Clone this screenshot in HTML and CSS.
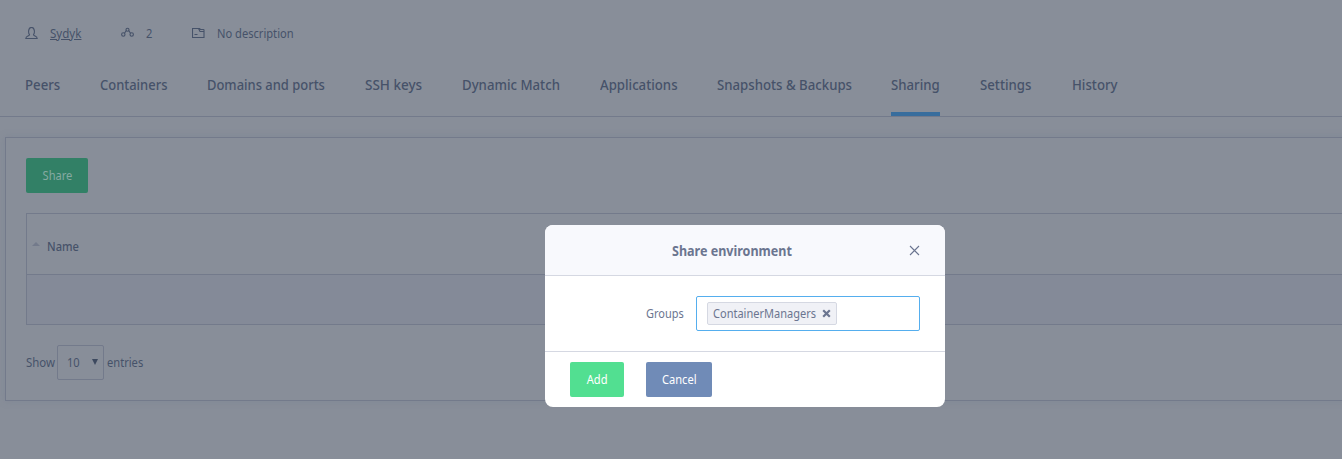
FILE: index.html
```
<!DOCTYPE html>
<html lang="en">
<head>
<meta charset="utf-8">
<title>Share environment</title>
<link rel="stylesheet" href="styles.css">
</head>
<body>
<div class="page">
  <header class="meta">
    <svg class="icon user" width="13" height="13" viewBox="0 0 13 13"><path d="M4.500 7.500C3.300 6.500 2.800 .5 6.500 .5S9.700 6.500 8.500 7.500c0 2 3.500 1.200 3.700 4H.8c.2-2.800 3.700-2 3.700-4z"/></svg>
    <a class="owner"><span class="t">Sydyk</span></a>
    <svg class="icon peers" width="13" height="12" viewBox="0 0 13 12"><circle cx="6.500" cy="2.700" r="1.500"/><circle cx="2.300" cy="7.500" r="1.700"/><circle cx="10.700" cy="7.500" r="1.700"/><path d="M5.300 3.500L3.500 6.300M7.700 3.500l1.800 2.800"/></svg>
    <span class="count"><span class="t">2</span></span>
    <svg class="icon folder" width="13" height="12" viewBox="0 0 13 12"><path d="M.500 1.500h7L8.500 2.500h3q.500 0 .500.500v7.500H.500zM6.500 1.500L8 4.500h4M2.500 7.500h3"/></svg>
    <span class="desc"><span class="t">No description</span></span>
  </header>
  <nav class="tabs">
    <a class="tab peers-tab"><span class="t">Peers</span></a>
    <a class="tab containers"><span class="t">Containers</span></a>
    <a class="tab domains"><span class="t">Domains and ports</span></a>
    <a class="tab ssh"><span class="t">SSH keys</span></a>
    <a class="tab dynamic"><span class="t">Dynamic Match</span></a>
    <a class="tab apps"><span class="t">Applications</span></a>
    <a class="tab snapshots"><span class="t">Snapshots &amp; Backups</span></a>
    <a class="tab sharing active"><span class="t">Sharing</span></a>
    <a class="tab settings"><span class="t">Settings</span></a>
    <a class="tab history"><span class="t">History</span></a>
  </nav>
  <main class="panel">
    <button class="share"><span class="t">Share</span></button>
    <div class="table">
      <div class="head"><i class="sort"></i><span class="t">Name</span></div>
      <div class="row"></div>
    </div>
    <div class="length"><span class="show"><span class="t">Show</span></span><div class="select"><span class="t">10</span><i class="caret"></i></div><span class="entries"><span class="t">entries</span></span></div>
  </main>
</div>
<section class="dialog">
  <header class="title"><h1><span class="t">Share environment</span></h1>
    <svg class="close" width="11" height="11" viewBox="0 0 11 11"><path d="M1 1l9 9M10 1l-9 9"/></svg>
  </header>
  <div class="field"><label><span class="t">Groups</span></label>
    <div class="input"><div class="chip"><span class="group"><span class="t">ContainerManagers</span></span><svg width="9" height="9" viewBox="0 0 9 9"><path d="M1.200 1.200l6.600 6.600M7.800 1.200L1.200 7.800"/></svg></div></div>
  </div>
  <footer class="actions"><button class="add"><span class="t">Add</span></button><button class="cancel"><span class="t">Cancel</span></button></footer>
</section>
</body>
</html>
```
FILE: styles.css
```
* { box-sizing: border-box; }
body { margin: 0; height: 459px; overflow: hidden; background: #888e99; color: #465269; font: 13px/18px "Noto Sans", "Open Sans", sans-serif; white-space: nowrap; }
/* Narrowed lettering */
.t { display: inline-block; transform: scaleX(.855); transform-origin: left center; }
button { font: inherit; border: 0; border-radius: 2px; padding: 0 0 1px; height: 35px; color: #fff; display: flex; justify-content: center; align-items: center; }
button .t { transform-origin: center; }
.page { width: 1342px; overflow: hidden; height: 459px; }
.meta { display: flex; align-items: center; height: 66px; margin-bottom: 1px; padding-left: 25px; }
.icon { fill: none; stroke: #465269; stroke-width: 1.1; flex: none; }
.owner { width: 32px; margin-left: 12px; }
.owner .t { text-decoration: underline; text-underline-offset: 1px; transform: scaleX(.89); }
.icon.peers { margin-left: 39px; }
.count { width: 8px; margin-left: 12px; }
.icon.folder { margin-left: 38px; }
.desc { margin-left: 12px; }
.tabs { display: flex; gap: 40px; height: 50px; padding-left: 25px; border-bottom: 1px solid #737a8b; font-size: 15px; font-weight: 500; line-height: 34px; }
.tabs .t { transform: scaleX(.88); }
.tabs .domains .t, .tabs .containers .t { transform: scaleX(.863); }
.tabs .ssh .t { transform: scaleX(.9); }
.tab { height: 49px; flex: none; }
.peers-tab { width: 35px; } .containers { width: 67px; } .domains { width: 118px; } .ssh { width: 57px; } .dynamic { width: 98px; } .apps { width: 77px; } .snapshots { width: 134px; } .sharing { width: 49px; } .settings { width: 52px; } .history { width: 47px; }
.active { border-bottom: 4px solid #386d9d; }
.panel { width: 1400px; height: 264px; margin: 20px 0 0 5px; border: 1px solid #737a8b; padding: 20px; box-shadow: 0 0 7px #747b8c66; }
.share { width: 62px; background: #328066; color: #86aaa2; }
.table { margin-top: 20px; height: 112px; border: 1px solid #737a8b; }
.head { height: 61px; border-bottom: 1px solid #737a8b; display: flex; align-items: center; padding: 4px 0 0 5px; font-weight: 500; }
.sort { border: 4px solid transparent; border-top: 0; border-bottom: 4px solid #737a8b; margin: 0 7px 4px 0; }
.row { height: 49px; background: #848a98; }
.length { height: 35px; margin-top: 20px; display: flex; align-items: center; }
.show { width: 31px; padding-bottom: 2px; }
.show .t { transform: scaleX(.88); }
.select { width: 47px; height: 35px; border: 1px solid #737a8b; border-radius: 2px; display: flex; align-items: center; justify-content: space-between; padding: 0 5px 1px 9px; }
.caret { border: 3px solid transparent; border-top: 6px solid #3d495f; border-bottom: 0; }
.entries { margin-left: 3px; padding-bottom: 2px; }
.dialog { position: absolute; left: 545px; top: 225px; width: 400px; height: 182px; background: #fff; border-radius: 8px; overflow: hidden; color: #6b7590; }
.title { display: flex; align-items: center; justify-content: space-between; height: 51px; padding: 0 25px 0 127px; background: #f8f9fd; border-bottom: 1px solid #d5d8e2; }
h1 { margin: 0; font-size: 15px; line-height: 20px; font-weight: 700; }
h1 .t { transform: scaleX(.836); }
.close { fill: none; stroke: #6b7590; stroke-width: 1.1; }
.field { height: 75px; display: flex; align-items: center; padding-left: 101px; }
label { width: 50px; padding-bottom: 2px; }
label .t { transform: scaleX(.845); }
.input { width: 224px; height: 35px; border: 1px solid #55aeee; border-radius: 2px; padding: 5px 10px; }
.chip { width: 130px; height: 23px; background: #f0f1f6; border: 1px solid #d5d8e2; border-radius: 2px; display: flex; align-items: center; padding: 0 5px; justify-content: space-between; }
.group { width: 104px; padding-bottom: 2px; }
.group .t { transform: scaleX(.848); }
.chip svg { stroke: #6b7590; stroke-width: 2.2; flex: none; }
.actions { height: 56px; border-top: 1px solid #d5d8e2; display: flex; gap: 22px; padding: 10px 25px; }
.add { width: 54px; background: #52df91; }
.cancel { width: 66px; background: #708bb7; }
```
